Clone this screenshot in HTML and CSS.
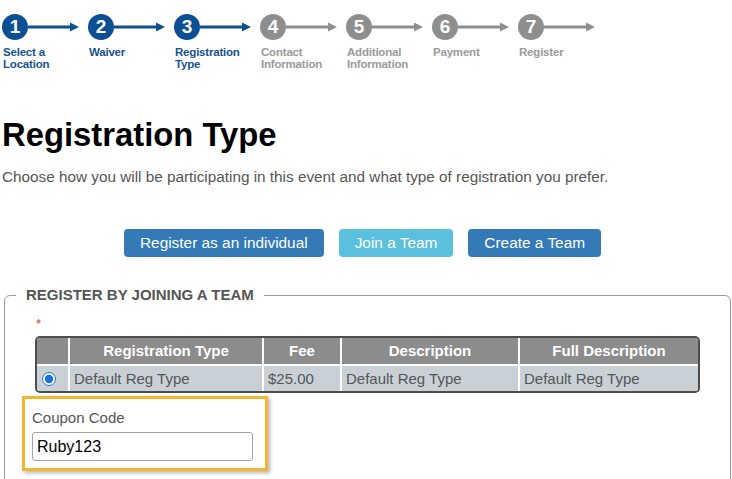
FILE: index.html
```html
<!DOCTYPE html>
<html lang="en">
<head>
<meta charset="utf-8">
<title>Registration Type</title>
<link rel="stylesheet" href="styles.css">
</head>
<body>
<ol class="steps">
  <li class="step done">
    <div class="node"><span class="num">1</span><svg class="arrow" width="51" height="26" viewBox="0 0 51 26"><line x1="0" y1="13" x2="45" y2="13"/><polygon points="42,8.5 51,13 42,17.5"/></svg></div>
    <div class="label">Select a<br>Location</div>
  </li>
  <li class="step done">
    <div class="node"><span class="num">2</span><svg class="arrow" width="51" height="26" viewBox="0 0 51 26"><line x1="0" y1="13" x2="45" y2="13"/><polygon points="42,8.5 51,13 42,17.5"/></svg></div>
    <div class="label">Waiver</div>
  </li>
  <li class="step done">
    <div class="node"><span class="num">3</span><svg class="arrow" width="51" height="26" viewBox="0 0 51 26"><line x1="0" y1="13" x2="45" y2="13"/><polygon points="42,8.5 51,13 42,17.5"/></svg></div>
    <div class="label">Registration<br>Type</div>
  </li>
  <li class="step todo">
    <div class="node"><span class="num">4</span><svg class="arrow" width="51" height="26" viewBox="0 0 51 26"><line x1="0" y1="13" x2="45" y2="13"/><polygon points="42,8.5 51,13 42,17.5"/></svg></div>
    <div class="label">Contact<br>Information</div>
  </li>
  <li class="step todo">
    <div class="node"><span class="num">5</span><svg class="arrow" width="51" height="26" viewBox="0 0 51 26"><line x1="0" y1="13" x2="45" y2="13"/><polygon points="42,8.5 51,13 42,17.5"/></svg></div>
    <div class="label">Additional<br>Information</div>
  </li>
  <li class="step todo">
    <div class="node"><span class="num">6</span><svg class="arrow" width="51" height="26" viewBox="0 0 51 26"><line x1="0" y1="13" x2="45" y2="13"/><polygon points="42,8.5 51,13 42,17.5"/></svg></div>
    <div class="label">Payment</div>
  </li>
  <li class="step todo">
    <div class="node"><span class="num">7</span><svg class="arrow" width="51" height="26" viewBox="0 0 51 26"><line x1="0" y1="13" x2="45" y2="13"/><polygon points="42,8.5 51,13 42,17.5"/></svg></div>
    <div class="label">Register</div>
  </li>
</ol>

<main class="page">
  <h1 class="title">Registration Type</h1>
  <p class="intro">Choose how you will be participating in this event and what type of registration you prefer.</p>

  <div class="choices">
    <button class="btn btn-primary" type="button">Register as an individual</button>
    <button class="btn btn-info" type="button">Join a Team</button>
    <button class="btn btn-primary" type="button">Create a Team</button>
  </div>

  <fieldset class="group">
    <legend class="group-title">REGISTER BY JOINING A TEAM</legend>
    <div class="req">*</div>
    <div class="table-wrap">
      <table class="reg-table">
        <thead>
          <tr>
            <th class="c-sel"></th>
            <th class="c-type">Registration Type</th>
            <th class="c-fee">Fee</th>
            <th class="c-desc">Description</th>
            <th class="c-full">Full Description</th>
          </tr>
        </thead>
        <tbody>
          <tr>
            <td class="c-sel"><input class="radio" type="radio" name="regtype" checked></td>
            <td>Default Reg Type</td>
            <td>$25.00</td>
            <td>Default Reg Type</td>
            <td>Default Reg Type</td>
          </tr>
        </tbody>
      </table>
    </div>
    <div class="coupon">
      <label class="coupon-label" for="coupon">Coupon Code</label>
      <input class="coupon-input" id="coupon" type="text" value="Ruby123">
    </div>
  </fieldset>
</main>
</body>
</html>
```

FILE: styles.css
```css
* { box-sizing: border-box; }

body {
  margin: 0;
  background: #fff;
  color: #555;
  font-family: "Liberation Sans", Arial, sans-serif;
  overflow: hidden;
}

/* ---------- stepper ---------- */
.steps {
  list-style: none;
  margin: 0;
  padding: 14px 0 0 2px;
  display: flex;
}
.step { width: 86px; flex: none; }
.node { display: flex; align-items: center; height: 26px; }
.num {
  width: 26px;
  height: 26px;
  flex: none;
  border-radius: 50%;
  background: #0c4f92;
  color: #fff;
  font-weight: bold;
  font-size: 19px;
  line-height: 26px;
  text-align: center;
}
.arrow { display: block; flex: none; }
.arrow line { stroke: #0c4f92; stroke-width: 3; }
.arrow polygon { fill: #0c4f92; }
.todo .num { background: #8e8e8e; }
.todo .arrow line { stroke: #8e8e8e; }
.todo .arrow polygon { fill: #8e8e8e; }
.label {
  margin: 6px 0 0 1px;
  font-size: 11.5px;
  font-weight: bold;
  line-height: 12px;
  color: #17528f;
  letter-spacing: -0.2px;
}
.todo .label { color: #9a9a9a; }

/* ---------- page ---------- */
.page { padding: 0 0 0 2px; }
.title {
  margin: 49px 0 0;
  font-size: 32.8px;
  line-height: 32px;
  font-weight: bold;
  color: #000;
}
.intro {
  margin: 17px 0 0;
  font-size: 15.3px;
  line-height: 18px;
  color: #555;
}

.choices {
  margin-top: 43px;
  display: flex;
  justify-content: center;
  gap: 15px;
  padding-right: 9px;
}
.btn {
  height: 28px;
  padding: 0 16px;
  border: 0;
  border-radius: 4px;
  color: #fff;
  font-family: inherit;
  font-size: 15.4px;
  line-height: 28px;
}
.btn-primary { background: #337ab7; }
.btn-info { background: #5bc0de; }

/* ---------- fieldset ---------- */
.group {
  margin: 29px 1px 0 2px;
  padding: 0 0 30px 30px;
  border: 1px solid #999;
  border-radius: 6px;
  min-width: 0;
}
.group-title {
  margin-left: -19px;
  padding: 0 10px;
  font-size: 15px;
  line-height: 18px;
  font-weight: bold;
  color: #555;
}
.req {
  margin: 13px 0 0 1px;
  height: 19px;
  font-size: 13px;
  line-height: 13px;
  color: #e5322f;
}

.table-wrap {
  width: 665px;
  border: 2px solid #4d4d4d;
  border-radius: 5px;
  overflow: hidden;
}
.reg-table {
  width: 661px;
  table-layout: fixed;
  border-collapse: separate;
  border-spacing: 0;
  font-size: 15px;
}
.reg-table th,
.reg-table td {
  border-left: 2px solid #fff;
  padding: 4px 4px;
  line-height: 18px;
  white-space: nowrap;
}
.reg-table th:first-child,
.reg-table td:first-child { border-left: 0; }
.reg-table th {
  background: #8c8c8c;
  color: #fff;
  font-weight: bold;
  text-align: center;
}
.reg-table td {
  background: #c9d1d7;
  color: #555;
  text-align: left;
  border-top: 2px solid #fff;
  padding-bottom: 3px;
}
.c-sel { width: 31px; }
.c-type { width: 194px; }
.c-fee { width: 78px; }
.c-desc { width: 178px; }
.c-full { width: 180px; }
.reg-table td.c-sel { padding: 0 0 0 5px; }
.radio {
  display: block;
  width: 14px;
  height: 14px;
  margin: 0;
  accent-color: #1a6fe8;
}

/* ---------- coupon ---------- */
.coupon {
  margin: 3px 0 0 -13px;
  width: 246px;
  height: 75px;
  padding: 10px 0 0 7px;
  border: 3px solid #f6b52f;
  box-shadow: 2px 2px 4px rgba(0, 0, 0, 0.3);
}
.coupon-label {
  display: block;
  font-size: 15px;
  line-height: 18px;
  color: #555;
}
.coupon-input {
  display: block;
  margin-top: 5px;
  width: 221px;
  height: 29px;
  padding: 0 4px;
  border: 1px solid #a3a3a3;
  border-radius: 3px;
  font-family: inherit;
  font-size: 16px;
  color: #000;
  background: #fff;
}
```
